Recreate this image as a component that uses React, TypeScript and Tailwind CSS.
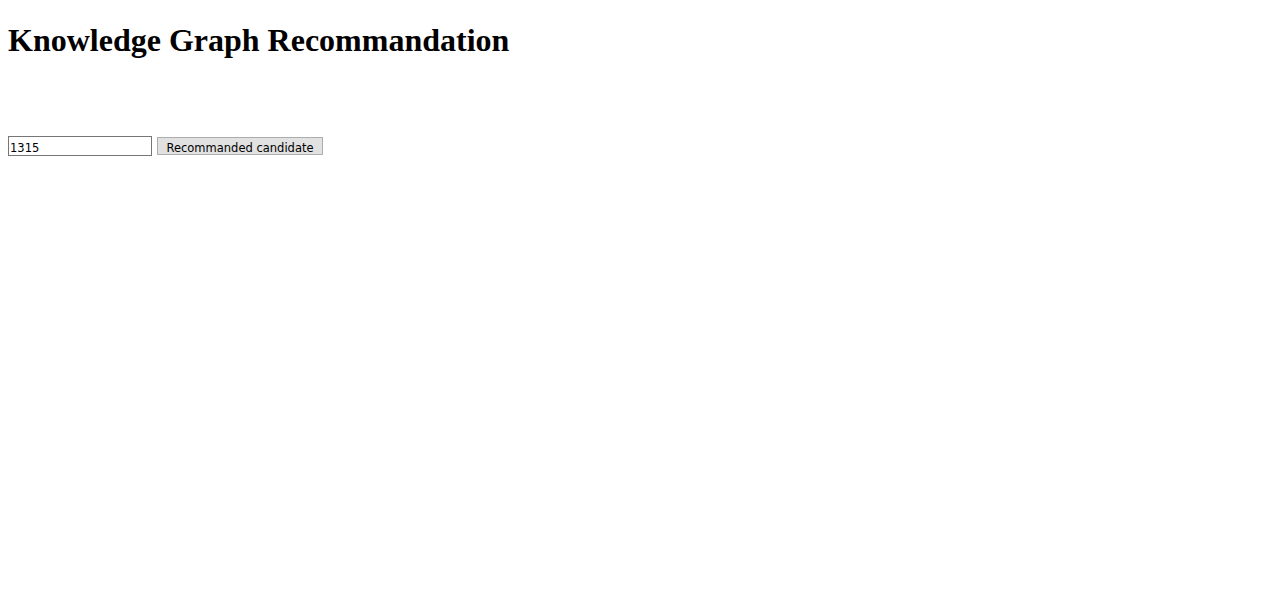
import { useState } from 'react';

function App() {
  const [candidate, setCandidate] = useState('1315');

  return (
    <div className="min-h-screen w-full bg-white px-2 text-black">
      {/* TITLE */}
      <h1 className="mt-[22px] mb-0 text-[32px] leading-[37px] font-bold font-['Liberation_Serif','Times_New_Roman',serif]">
        Knowledge Graph Recommandation
      </h1>

      {/* SEARCH ROW */}
      <div className="mt-[77px] flex items-start">
        <input
          type="text"
          value={candidate}
          onChange={(e) => setCandidate(e.target.value)}
          className="h-[20px] w-[144px] border border-[#767676] bg-white px-[1px] pt-[3px] text-[11.5px] leading-[15px] text-black outline-none font-['DejaVu_Sans','Verdana',sans-serif]"
        />
        <button
          type="button"
          className="mt-[1px] ml-[5px] flex h-[18px] w-[166px] items-center justify-center border border-[#adadad] bg-[#e1e1e1] pt-[5px] text-[11.5px] leading-none text-black font-['DejaVu_Sans','Verdana',sans-serif]"
        >
          Recommanded candidate
        </button>
      </div>
    </div>
  );
}

export default App;
